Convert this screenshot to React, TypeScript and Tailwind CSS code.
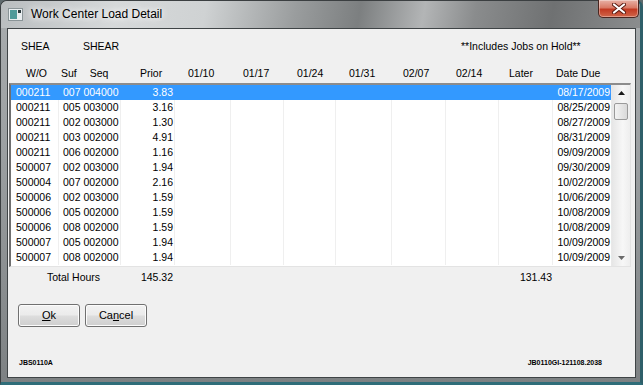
import React from "react";

interface Job {
  wo: string;
  suf: string;
  seq: string;
  prior: string;
  due: string;
}

const jobs: Job[] = [
  { wo: "000211", suf: "007", seq: "004000", prior: "3.83", due: "08/17/2009" },
  { wo: "000211", suf: "005", seq: "003000", prior: "3.16", due: "08/25/2009" },
  { wo: "000211", suf: "002", seq: "003000", prior: "1.30", due: "08/27/2009" },
  { wo: "000211", suf: "003", seq: "002000", prior: "4.91", due: "08/31/2009" },
  { wo: "000211", suf: "006", seq: "002000", prior: "1.16", due: "09/09/2009" },
  { wo: "500007", suf: "002", seq: "003000", prior: "1.94", due: "09/30/2009" },
  { wo: "500004", suf: "007", seq: "002000", prior: "2.16", due: "10/02/2009" },
  { wo: "500006", suf: "002", seq: "003000", prior: "1.59", due: "10/06/2009" },
  { wo: "500006", suf: "005", seq: "002000", prior: "1.59", due: "10/08/2009" },
  { wo: "500006", suf: "008", seq: "002000", prior: "1.59", due: "10/08/2009" },
  { wo: "500007", suf: "005", seq: "002000", prior: "1.94", due: "10/09/2009" },
  { wo: "500007", suf: "008", seq: "002000", prior: "1.94", due: "10/09/2009" },
];

// same column widths for header, rows and totals
const cols =
  "grid grid-cols-[48px_62px_54px_56px_53px_52px_56px_54px_53px_54px_58px]";

const weeks = ["01/10", "01/17", "01/24", "01/31", "02/07", "02/14"];
const weekPad = ["pl-[13px]", "pl-[12px]", "pl-[13px]", "pl-[13px]", "pl-[11px]", "pl-[10px]"];

const WindowIcon = () => (
  <svg width="15" height="13" viewBox="0 0 15 13">
    <rect x="0.5" y="0.5" width="14" height="12" fill="#e9eef0" stroke="#8a9497" />
    <rect x="2" y="2" width="7" height="9" fill="#4f9a9a" />
    <rect x="10" y="2" width="3" height="3" fill="#2c3a3c" />
  </svg>
);

const CloseButton = () => (
  <div className="w-[41px] h-[18px] rounded-b-[5px] border border-t-0 border-[#4a2620] bg-[linear-gradient(180deg,#e8b2a6_0%,#d97a66_45%,#c23a22_55%,#d0664a_100%)] flex items-center justify-center shadow-[inset_0_0_0_1px_rgba(255,255,255,0.35)]">
    <svg width="14" height="11" viewBox="0 0 14 11">
      <path d="M2 1.5 L12 9.5 M12 1.5 L2 9.5" stroke="#5a1a10" strokeWidth="4" strokeLinecap="round" />
      <path d="M2 1.5 L12 9.5 M12 1.5 L2 9.5" stroke="#ffffff" strokeWidth="2.2" strokeLinecap="round" />
    </svg>
  </div>
);

const Scrollbar = () => (
  <div className="w-[19px] flex flex-col bg-[linear-gradient(90deg,#e6e6e6,#f7f7f7_60%,#eeeeee)] border-l border-[#e8e8e8]">
    <div className="h-[16px] flex items-center justify-center">
      <svg width="7" height="4" viewBox="0 0 7 4">
        <path d="M0 4 L3.5 0 L7 4 Z" fill="#1a1a1a" />
      </svg>
    </div>
    <div className="flex-1">
      <div className="mt-[2px] mx-auto w-[14px] h-[17px] rounded-[2px] border border-[#9a9a9a] bg-[linear-gradient(90deg,#f3f3f3,#e6e6e6_50%,#d9d9d9)]" />
    </div>
    <div className="h-[16px] flex items-center justify-center">
      <svg width="7" height="4" viewBox="0 0 7 4">
        <path d="M0 0 L7 0 L3.5 4 Z" fill="#6a6a6a" />
      </svg>
    </div>
  </div>
);

const Button = ({ children }: { children: React.ReactNode }) => (
  <button className="w-[62px] h-[23px] rounded-[3px] border border-[#707070] bg-[linear-gradient(180deg,#f2f2f2_0%,#ebebeb_48%,#dddddd_52%,#cfcfcf_100%)] shadow-[inset_0_0_0_1px_#fcfcfc] text-[11px] text-black leading-none">
    {children}
  </button>
);

export default function App() {
  return (
    <div className="w-[643px] h-[385px] overflow-hidden bg-[#5f6a6d] font-['Liberation_Sans',Arial,sans-serif]">
      <div className="w-[643px] h-[385px] rounded-t-[7px] border border-[#3b3f41] border-r-[3px] border-b-[3px] border-r-[#2f5f69] border-b-[#2f6d79] bg-[linear-gradient(180deg,#a9adaf_0%,#9b9fa1_40%,#7d8183_100%)] flex flex-col">
        {/* Title bar */}
        <div className="h-[27px] relative flex items-start rounded-t-[6px] bg-[linear-gradient(100deg,#b9bdbf_0%,#d6d9da_18%,#cfd2d3_32%,#9a9d9e_46%,#7c7f80_56%,#b3b5b6_66%,#8a8c8d_74%,#6f7172_86%,#8b8d8e_100%)]">
          <div className="mt-[7px] ml-[7px]">
            <WindowIcon />
          </div>
          <span className="ml-[8px] mt-[4px] text-[12px] text-black [text-shadow:0_0_6px_#ffffff,0_0_10px_#ffffff]">
            Work Center Load Detail
          </span>
          <div className="absolute right-[1px] top-[-1px]">
            <CloseButton />
          </div>
        </div>

        {/* Client area */}
        <div className="ml-[6px] w-[629px] h-[350px] border border-[#3f4446] bg-[#f0f0f0] flex flex-col text-[10.5px] text-black">
          <div className="mt-[11px] h-[13px] leading-[13px] flex pl-[13px]">
            <span className="w-[62px]">SHEA</span>
            <span className="w-[378px]">SHEAR</span>
            <span>**Includes Jobs on Hold**</span>
          </div>

          <div className={`${cols} ml-[3px] mt-[14px] h-[13px] leading-[13px]`}>
            <span className="pl-[15px]">W/O</span>
            <span className="pl-[2px] flex gap-[13px]">
              <span>Suf</span>
              <span>Seq</span>
            </span>
            <span className="pl-[19px]">Prior</span>
            {weeks.map((w, i) => (
              <span key={w} className={weekPad[i]}>
                {w}
              </span>
            ))}
            <span className="pl-[10px]">Later</span>
            <span className="pl-[3px]">Date Due</span>
          </div>

          {/* List */}
          <div className="ml-[1px] mt-[3px] w-[622px] h-[184px] border-l-2 border-t-2 border-r border-b border-l-[#6f6f6f] border-t-[#8c8c8c] border-r-[#e3e3e3] border-b-[#e3e3e3] bg-white flex">
            <div className="w-[600px] text-[10.5px]">
              {jobs.map((j, idx) => {
                const sel = idx === 0;
                const line = sel ? "border-r border-[#3399ff]" : "border-r border-[#efefef]";
                return (
                  <div
                    key={idx}
                    className={`${cols} h-[15px] leading-[15px] ${sel ? "bg-[#3399ff] text-white" : "text-black"}`}
                  >
                    <div className={`pl-[5px] ${line}`}>{j.wo}</div>
                    <div className={`pl-[4px] whitespace-pre ${line}`}>{`${j.suf} ${j.seq}`}</div>
                    <div className={`text-right pr-[1px] ${line}`}>{j.prior}</div>
                    <div className={line} />
                    <div className={line} />
                    <div className={line} />
                    <div className={line} />
                    <div className={line} />
                    <div className={line} />
                    <div className={line} />
                    <div className="text-right pr-[1px]">{j.due}</div>
                  </div>
                );
              })}
            </div>
            <Scrollbar />
          </div>

          {/* Totals */}
          <div className={`${cols} ml-[3px] mt-[4px] h-[13px] leading-[13px]`}>
            <span className="col-span-2 pl-[36px]">Total Hours</span>
            <span className="text-right pr-[2px]">145.32</span>
            <span className="col-span-6" />
            <span className="text-right pr-[1px]">131.43</span>
          </div>

          <div className="mt-[20px] ml-[10px] flex gap-[5px]">
            <Button>
              <span className="underline">O</span>k
            </Button>
            <Button>
              Ca<span className="underline">n</span>cel
            </Button>
          </div>

          <div className="mt-[32px] flex justify-between pl-[11px] pr-[33px] text-[7px] font-bold leading-[8px]">
            <span>JBS0110A</span>
            <span>JB0110GI-121108.2038</span>
          </div>
        </div>
      </div>
    </div>
  );
}
